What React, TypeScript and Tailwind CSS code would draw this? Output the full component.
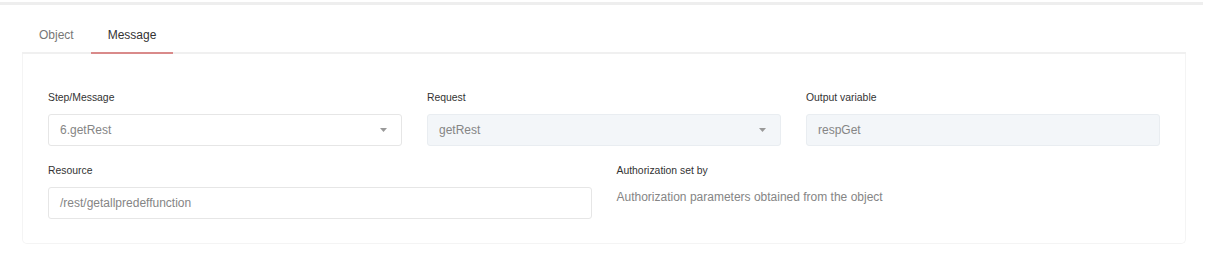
import { useState } from 'react'

const font = "font-['Liberation_Sans',Arial,sans-serif]"

function Caret() {
  return (
    <svg width="7" height="4" viewBox="0 0 7 4" className="shrink-0">
      <path d="M0 0h7L3.5 4z" fill="#999" />
    </svg>
  )
}

function SelectBox({ value, disabled }: { value: string; disabled?: boolean }) {
  return (
    <div
      className={`flex h-[32px] items-center justify-between rounded-[3px] border px-[11px] pr-[14px] text-[12px] text-[#858585] ${
        disabled ? 'border-[#e9edf1] bg-[#f3f6f9]' : 'border-[#e6e6e6] bg-white'
      }`}
    >
      <span>{value}</span>
      <Caret />
    </div>
  )
}

function Field({ label, children, className = '' }: { label: string; children: React.ReactNode; className?: string }) {
  return (
    <div className={className}>
      <div className="mb-[9px] text-[10.4px] leading-[14px] text-[#333]">{label}</div>
      {children}
    </div>
  )
}

export default function App() {
  const [tab, setTab] = useState('message')
  const tabs = [
    { key: 'object', label: 'Object' },
    { key: 'message', label: 'Message' },
  ]

  return (
    <div className={`h-[261px] w-[1209px] bg-white ${font}`}>
      <div className="pt-[2px] pr-[6px]">
        <div className="h-[3px] bg-[#eeeeee]" />
      </div>

      <div className="mx-[22px] mt-[8px] w-[1164px]">
        <div className="flex border-b-2 border-[#f0f0f0]">
          {tabs.map((t) => (
            <button
              key={t.key}
              type="button"
              onClick={() => setTab(t.key)}
              className={`-mb-[2px] h-[41px] border-b-2 px-[17px] pt-[5px] text-[12px] ${
                tab === t.key ? 'border-[#d98a8a] text-[#333]' : 'border-transparent text-[#777]'
              }`}
            >
              {t.label}
            </button>
          ))}
        </div>

        <section className="rounded-b-[5px] border border-t-0 border-[#f4f4f4] px-[25px] pt-[37px] pb-[24px]">
          <div className="grid grid-cols-6 gap-x-[25px] gap-y-[18px]">
            <Field label="Step/Message" className="col-span-2">
              <SelectBox value="6.getRest" />
            </Field>
            <Field label="Request" className="col-span-2">
              <SelectBox value="getRest" disabled />
            </Field>
            <Field label="Output variable" className="col-span-2">
              <div className="flex h-[32px] items-center rounded-[3px] border border-[#e9edf1] bg-[#f3f6f9] px-[11px] text-[12px] text-[#858585]">
                respGet
              </div>
            </Field>
            <Field label="Resource" className="col-span-3">
              <div className="flex h-[32px] items-center rounded-[3px] border border-[#e6e6e6] bg-white px-[11px] text-[12px] text-[#858585]">
                /rest/getallpredeffunction
              </div>
            </Field>
            <Field label="Authorization set by" className="col-span-3">
              <div className="pt-[2px] text-[12px] leading-[16px] text-[#858585]">
                Authorization parameters obtained from the object
              </div>
            </Field>
          </div>
        </section>
      </div>
    </div>
  )
}
